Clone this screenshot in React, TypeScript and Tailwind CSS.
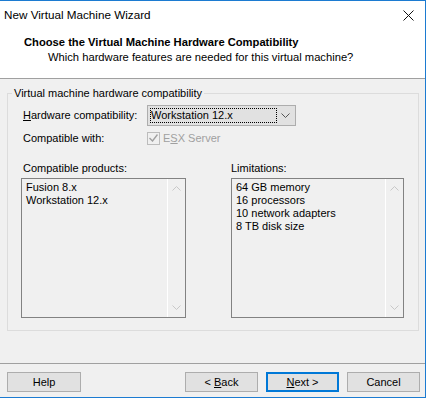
import React from 'react'

const font = { fontFamily: '"Segoe UI", "Liberation Sans", Arial, sans-serif' }

const Chevron: React.FC<{ up?: boolean; className?: string }> = ({ up, className }) => (
  <svg width="9" height="5" viewBox="0 0 9 5" className={className}>
    <path d={up ? 'M0.5 4.5 L4.5 0.5 L8.5 4.5' : 'M0.5 0.5 L4.5 4.5 L8.5 0.5'} fill="none" stroke="currentColor" strokeWidth="1" />
  </svg>
)

const ListBox: React.FC<{ items: string[]; width: string }> = ({ items, width }) => (
  <div className={`${width} h-[140px] border border-[#828282] bg-[#f0f0f0] flex`}>
    <div className="flex-1 pl-[4px] pt-[2px] leading-[13px] text-[11px] text-black">
      {items.map((it) => (
        <div key={it}>{it}</div>
      ))}
    </div>
    {/* disabled scrollbar */}
    <div className="w-[18px] border-l border-white flex flex-col items-center justify-between py-[7px] text-[#c8c8c8]">
      <Chevron up />
      <Chevron />
    </div>
  </div>
)

const Button: React.FC<{ children: React.ReactNode; primary?: boolean; width?: string }> = ({
  children,
  primary,
  width = 'w-[73px]',
}) => (
  <button
    className={`${width} h-[20px] bg-[#e1e1e1] text-[11px] text-black flex items-center justify-center ${
      primary ? 'border-2 border-[#0078d7]' : 'border border-[#adadad]'
    }`}
  >
    {children}
  </button>
)

const App: React.FC = () => {
  return (
    <div className="w-[427px] h-[399px] bg-white" style={font}>
      <div className="w-[426px] h-[398px] border-t border-r border-b border-[#1c7bd1] bg-[#f0f0f0] flex flex-col">
        {/* Header */}
        <div className="h-[78px] bg-white border-b border-[#a0a0a0]">
          <div className="h-[28px] flex items-center justify-between pl-[4px] pr-[11px]">
            <span className="text-[11.7px] text-black">New Virtual Machine Wizard</span>
            <svg width="11" height="11" viewBox="0 0 11 11">
              <path d="M0.5 0.5 L10.5 10.5 M10.5 0.5 L0.5 10.5" stroke="#111" strokeWidth="1" />
            </svg>
          </div>
          <div className="mt-[6px] pl-[24px] text-[11.2px] font-bold text-black leading-[15px]">
            Choose the Virtual Machine Hardware Compatibility
          </div>
          <div className="pl-[48px] text-[11.2px] text-black leading-[15px]">
            Which hardware features are needed for this virtual machine?
          </div>
        </div>

        {/* Body */}
        <div className="flex-1 px-[7px] pt-[14px]">
          <div className="relative w-[412px] h-[238px] border border-[#dcdcdc] pl-[13px]">
            <span className="absolute -top-[8px] left-[4px] px-[2px] bg-[#f0f0f0] text-[11px] leading-[15px] text-black whitespace-nowrap">
              Virtual machine hardware compatibility
            </span>

            <div className="mt-[11px] flex items-center h-[21px]">
              <span className="w-[126px] pl-[2px] text-[11px] text-black whitespace-nowrap">
                <span className="underline">H</span>ardware compatibility:
              </span>
              <div className="w-[149px] h-[21px] border border-[#adadad] bg-[#e1e1e1] flex items-center pl-[2px] pr-[5px]">
                <div className="w-[127px] h-[15px] border border-dotted border-black flex items-center text-[11px] text-black whitespace-nowrap">
                  Workstation 12.x
                </div>
                <div className="flex-1 flex justify-end text-[#555]">
                  <Chevron />
                </div>
              </div>
            </div>

            <div className="mt-[4px] flex items-center h-[16px]">
              <span className="w-[126px] pl-[2px] text-[11px] text-black whitespace-nowrap">Compatible with:</span>
              <div className="w-[13px] h-[13px] border border-[#bcbcbc] bg-[#f0f0f0] flex items-center justify-center">
                <svg width="9" height="8" viewBox="0 0 9 8">
                  <path d="M0.5 4 L3.5 7 L8.5 0.5" fill="none" stroke="#a0a0a0" strokeWidth="1.4" />
                </svg>
              </div>
              <span className="ml-[3px] text-[11px] text-[#a0a0a0] whitespace-nowrap">
                E<span className="underline">S</span>X Server
              </span>
            </div>

            <div className="mt-[15px] flex gap-[45px]">
              <div className="flex flex-col">
                <span className="pl-[2px] text-[11px] leading-[15px] text-black mb-[2px]">Compatible products:</span>
                <ListBox width="w-[165px]" items={['Fusion 8.x', 'Workstation 12.x']} />
              </div>
              <div className="flex flex-col">
                <span className="text-[11px] leading-[15px] text-black mb-[2px]">Limitations:</span>
                <ListBox
                  width="w-[173px]"
                  items={['64 GB memory', '16 processors', '10 network adapters', '8 TB disk size']}
                />
              </div>
            </div>
          </div>
        </div>

        {/* Footer */}
        <div className="border-t border-[#a0a0a0] h-[34px] flex items-start pt-[8px] pl-[7px] pr-[5px]">
          <Button width="w-[74px]">Help</Button>
          <div className="flex-1" />
          <div className="flex gap-[8px]">
            <Button>
              &lt; <span className="underline ml-[3px]">B</span>ack
            </Button>
            <Button primary>
              <span className="underline">N</span>ext &gt;
            </Button>
            <Button>Cancel</Button>
          </div>
        </div>
      </div>
    </div>
  )
}

export default App
